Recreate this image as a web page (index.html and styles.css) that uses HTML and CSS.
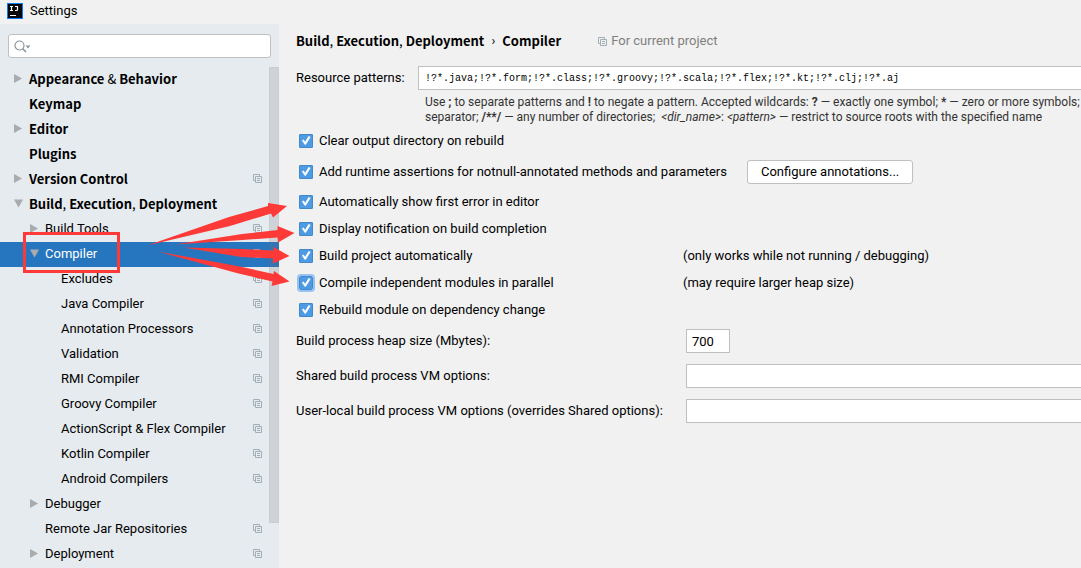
FILE: index.html
```html
<!DOCTYPE html>
<html lang="en">
<head>
<meta charset="utf-8">
<title>Settings</title>
<link rel="stylesheet" href="styles.css">
</head>
<body>
<svg class="defs" width="0" height="0" aria-hidden="true">
  <symbol id="copy" viewBox="0 0 9 9">
    <path d="M2.5 6.5h-2v-6h6v2" fill="none" stroke="currentColor"/>
    <path d="M2.500 2.500h6v6h-6zM4 4.500h3M4 6.500h3" fill="none" stroke="currentColor"/>
  </symbol>
</svg>
<header class="titlebar">
  <svg class="logo" width="16" height="16" viewBox="0 0 16 16" aria-hidden="true">
    <rect width="16" height="16" fill="#0a7cf0"/>
    <rect x="1" y="1" width="14" height="14" fill="#08090c"/>
    <path d="M3 3.500h3M4.500 3.500v4M3 7.500h3M8 3.500h2.500v3q0 1-1 1h-1.500M3 12.500h6" fill="none" stroke="#fff" stroke-width="1.200"/>
  </svg>
  <span>Settings</span>
</header>
<div class="window">
  <aside class="sidebar">
    <div class="search">
      <svg class="search-icon" width="17" height="14" viewBox="0 0 17 14" aria-hidden="true">
        <circle cx="5.500" cy="5.500" r="4.500" fill="none" stroke="#8c959d" stroke-width="1.200"/>
        <path d="M8.500 8.500l3.500 3.500" stroke="#8c959d" stroke-width="1.600"/>
        <path d="M11.500 5.500h5l-2.500 3z" fill="#8c959d"/>
      </svg>
      <input class="search-input" type="text" aria-label="Search settings">
    </div>
    <nav class="tree" aria-label="Settings sections">
      <ul class="tree-list">
        <li><a class="node top closed" href="#"><span class="label">Appearance <span class="light">&amp;</span> Behavior</span></a></li>
        <li><a class="node top" href="#"><span class="label">Keymap</span></a></li>
        <li><a class="node top closed" href="#"><span class="label">Editor</span></a></li>
        <li><a class="node top" href="#"><span class="label">Plugins</span></a></li>
        <li><a class="node top closed" href="#"><span class="label">Version Control</span><svg class="copy"><use href="#copy"/></svg></a></li>
        <li><a class="node top open" href="#"><span class="label">Build<span class="light">,</span> Execution<span class="light">,</span> Deployment</span></a></li>
        <li><a class="node second closed" href="#"><span class="label">Build Tools</span><svg class="copy"><use href="#copy"/></svg></a></li>
        <li><a class="node second open selected" href="#"><span class="label">Compiler</span><svg class="copy"><use href="#copy"/></svg></a></li>
        <li><a class="node third" href="#"><span class="label">Excludes</span><svg class="copy"><use href="#copy"/></svg></a></li>
        <li><a class="node third" href="#"><span class="label">Java Compiler</span><svg class="copy"><use href="#copy"/></svg></a></li>
        <li><a class="node third" href="#"><span class="label">Annotation Processors</span><svg class="copy"><use href="#copy"/></svg></a></li>
        <li><a class="node third" href="#"><span class="label">Validation</span><svg class="copy"><use href="#copy"/></svg></a></li>
        <li><a class="node third" href="#"><span class="label">RMI Compiler</span><svg class="copy"><use href="#copy"/></svg></a></li>
        <li><a class="node third" href="#"><span class="label">Groovy Compiler</span><svg class="copy"><use href="#copy"/></svg></a></li>
        <li><a class="node third" href="#"><span class="label">ActionScript &amp; Flex Compiler</span><svg class="copy"><use href="#copy"/></svg></a></li>
        <li><a class="node third" href="#"><span class="label">Kotlin Compiler</span><svg class="copy"><use href="#copy"/></svg></a></li>
        <li><a class="node third" href="#"><span class="label">Android Compilers</span><svg class="copy"><use href="#copy"/></svg></a></li>
        <li><a class="node second closed" href="#"><span class="label">Debugger</span></a></li>
        <li><a class="node second" href="#"><span class="label">Remote Jar Repositories</span><svg class="copy"><use href="#copy"/></svg></a></li>
        <li><a class="node second closed" href="#"><span class="label">Deployment</span><svg class="copy"><use href="#copy"/></svg></a></li>
      </ul>
      <div class="thumb"></div>
    </nav>
  </aside>
  <main class="content">
    <div class="crumbs">
      <h1 class="crumb">Build<span class="light">,</span> Execution<span class="light">,</span> Deployment</h1>
      <span class="crumb-sep">›</span>
      <h2 class="crumb">Compiler</h2>
      <span class="scope"><svg class="copy"><use href="#copy"/></svg>For current project</span>
    </div>
    <div class="patterns">
      <label for="patterns">Resource patterns:</label>
      <input class="field mono" id="patterns" type="text" value="!?*.java;!?*.form;!?*.class;!?*.groovy;!?*.scala;!?*.flex;!?*.kt;!?*.clj;!?*.aj">
      <p class="help">Use <b>;</b> to separate patterns and <b>!</b> to negate a pattern. Accepted wildcards: <b>?</b> — exactly one symbol; <b>*</b> — zero or more symbols; <b>/</b><br>separator; <b>/**/</b> — any number of directories; &nbsp;<i>&lt;dir_name&gt;</i>: <i>&lt;pattern&gt;</i> — restrict to source roots with the specified name</p>
    </div>
    <div class="check-row tall"><label class="check"><input type="checkbox" checked>Clear output directory on rebuild</label></div>
    <div class="check-row tall"><label class="check"><input type="checkbox" checked>Add runtime assertions for notnull-annotated methods and parameters</label><button class="button" type="button">Configure annotations...</button></div>
    <div class="checks">
      <div class="check-row"><label class="check"><input type="checkbox" checked>Automatically show first error in editor</label></div>
      <div class="check-row"><label class="check"><input type="checkbox" checked>Display notification on build completion</label></div>
      <div class="check-row noted"><label class="check"><input type="checkbox" checked>Build project automatically</label><span>(only works while not running / debugging)</span></div>
      <div class="check-row noted"><label class="check"><input class="focused" type="checkbox" checked>Compile independent modules in parallel</label><span>(may require larger heap size)</span></div>
      <div class="check-row"><label class="check"><input type="checkbox" checked>Rebuild module on dependency change</label></div>
    </div>
    <div class="options">
      <label for="heap">Build process heap size (Mbytes):</label>
      <input class="field short" id="heap" type="text" value="700">
      <label for="shared">Shared build process VM options:</label>
      <input class="field" id="shared" type="text">
      <label for="local">User-local build process VM options (overrides Shared options):</label>
      <input class="field" id="local" type="text">
    </div>
  </main>
</div>
<svg class="marks" width="300" height="300" viewBox="0 0 300 300" aria-hidden="true">
  <rect x="24.500" y="233.500" width="94" height="38" fill="none" stroke="#fd3a38" stroke-width="3"/>
  <g fill="#fd3a38">
    <path d="M147 245.500L229 217l39-11v-3l19 3-14 11.500-2-4-41 12.500z"/>
    <path d="M175 244.500l67-10.500 35.500-4v-4l17 7-16.500 9.500-.5-5-35 2.500z"/>
    <path d="M184 247.500l58 1.500 31.500 1.500v-3.500l16 9-16.500 7.500v-5l-32-1.500z"/>
    <path d="M157.500 251.500l82.500 15 33.500 7.500.5-3 15.500 10.500-18 4.500 1-4.500-34-8z"/>
  </g>
</svg>
</body>
</html>
```
FILE: styles.css
```css
* {
  box-sizing: border-box;
}

body {
  margin: 0;
  height: 100vh;
  display: flex;
  flex-direction: column;
  position: relative;
  overflow: hidden;
  background: #f1f1f1;
  color: #000;
  font-family: Roboto, "Open Sans", sans-serif;
  font-size: 13px;
  line-height: 20px;
}

input,
button {
  font: inherit;
  color: inherit;
}

.defs {
  position: absolute;
}

.titlebar {
  flex: none;
  display: flex;
  align-items: center;
  gap: 7px;
  height: 24px;
  padding: 0 7px 3px;
}

.window {
  flex: 1;
  min-height: 0;
  display: grid;
  grid-template-columns: 279px minmax(0, 1fr);
}

.sidebar {
  background: #e6ebef;
  padding-top: 10px;
  overflow: hidden;
}

.search {
  position: relative;
  margin: 0 8px 9px;
}

.search-icon {
  position: absolute;
  left: 6px;
  top: 6px;
}

.search-input {
  display: block;
  width: 100%;
  height: 24px;
  padding: 0 6px 0 26px;
  border: 1px solid #c0c0c0;
  border-radius: 3px;
  background: #fff;
}

.tree {
  position: relative;
}

.tree-list {
  margin: 0;
  padding: 0;
  list-style: none;
}

.node {
  display: flex;
  align-items: center;
  height: 25px;
  padding-right: 17px;
  padding-bottom: 2px;
  color: #000;
  text-decoration: none;
  white-space: nowrap;
}

.node::before {
  content: "";
  flex: none;
  width: 9px;
  height: 9px;
  margin-right: 6px;
}

.closed::before {
  background: #a9abad;
  clip-path: polygon(0 0, 90% 50%, 0 100%);
}

.open::before {
  background: #a9abad;
  clip-path: polygon(0 5%, 100% 5%, 50% 95%);
}

.label {
  flex: 1;
}

.top,
.crumb {
  font-family: "Noto Sans CJK SC", "Open Sans", sans-serif;
  font-size: 13px;
  font-weight: 700;
}

.top {
  padding-left: 14px;
}

.second {
  padding-left: 30px;
}

.third {
  padding-left: 46px;
}

.selected {
  background: #2675bf;
  color: #fff;
}

.light {
  font-weight: 400;
}

.copy {
  flex: none;
  width: 9px;
  height: 9px;
  color: #a2afb6;
}

.thumb {
  position: absolute;
  top: 0;
  right: 0;
  width: 10px;
  height: 456px;
  background: rgba(115, 115, 120, 0.2);
  border: 1px solid rgba(115, 115, 120, 0.06);
}

.content {
  padding-left: 17px;
  overflow: hidden;
  white-space: nowrap;
}

.crumbs {
  display: flex;
  align-items: center;
  height: 34px;
  margin-bottom: 8px;
}

.crumb {
  margin: 0;
}

.crumb-sep {
  width: 18px;
  text-align: center;
}

.scope {
  display: flex;
  align-items: center;
  gap: 4px;
  margin-left: 37px;
  color: #808080;
}

.patterns {
  display: grid;
  grid-template-columns: 122px minmax(0, 1fr);
  align-items: center;
}

.field {
  width: 100%;
  height: 24px;
  padding: 0 6px;
  border: 1px solid #c0c0c0;
  border-right: 0;
  border-radius: 0;
  background: #fff;
}

.mono {
  font-family: "Liberation Mono", monospace;
  font-size: 10px;
}

.short {
  width: 44px;
  padding: 0 5px;
  border-right: 1px solid #c0c0c0;
}

.help {
  grid-column: 2;
  margin: 5px 0 0;
  padding-left: 7px;
  color: #333;
  font-size: 12px;
  line-height: 15px;
}

.check-row {
  display: flex;
  align-items: center;
  gap: 20px;
  height: 27px;
}

.tall {
  height: 31px;
}

.checks {
  padding-top: 1px;
}

.noted {
  display: grid;
  grid-template-columns: 387px 1fr;
  gap: 0;
}

.check {
  display: flex;
  align-items: center;
  gap: 6px;
  padding-left: 3px;
}

.check input {
  appearance: none;
  flex: none;
  width: 14px;
  height: 14px;
  margin: 0;
  border: 1px solid #4488cb;
  border-radius: 1px;
  background: #4d9be2;
}

.check input::before {
  content: "";
  display: block;
  width: 12px;
  height: 12px;
  background: #fff;
  clip-path: polygon(16% 50%, 30% 42%, 43% 60%, 72% 12%, 88% 20%, 48% 86%, 38% 84%);
}

.check .focused {
  outline: 2px solid #97c3f3;
  border-radius: 2px;
}

.button {
  height: 24px;
  padding: 0 13px;
  border: 1px solid #c0c0c0;
  border-radius: 3px;
  background: #fff;
  line-height: 20px;
}

.options {
  display: grid;
  grid-template-columns: 390px minmax(0, 1fr);
  row-gap: 11px;
  align-items: center;
  padding-top: 6px;
}

.marks {
  position: absolute;
  left: 0;
  top: 0;
  pointer-events: none;
}
```
